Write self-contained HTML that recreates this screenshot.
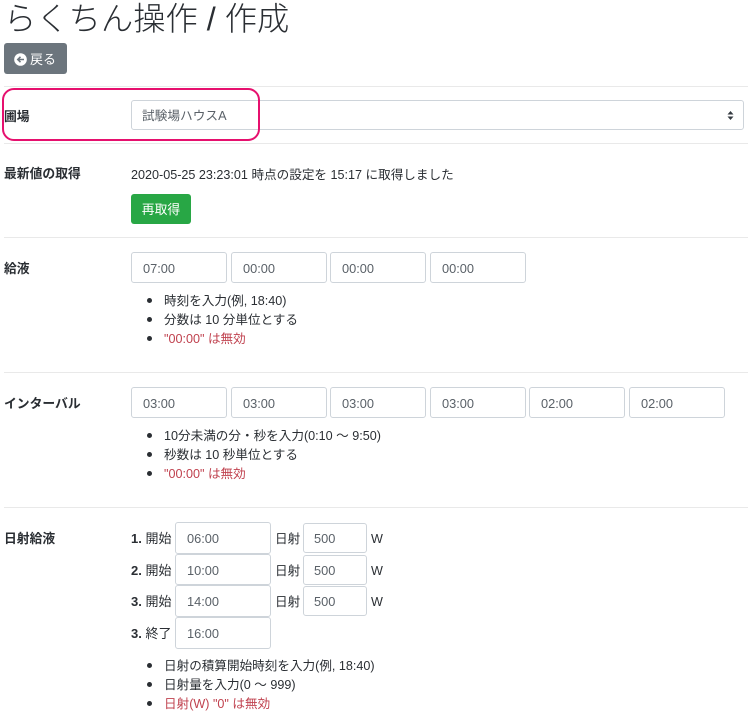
<!DOCTYPE html>
<html lang="ja"><head><meta charset="utf-8">
<style>
html,body{margin:0;padding:0;background:#fff}
body{width:748px;height:728px;position:relative;overflow:hidden;font-family:"Liberation Sans","Noto Sans CJK JP",sans-serif;font-size:12.6px;color:#2a2e33}
.a{position:absolute;white-space:nowrap;line-height:20px}
.hr{position:absolute;left:4px;width:744px;height:1px;background:#e9e9e9}
.lb{position:absolute;left:4px;font-weight:bold;font-size:12.8px;line-height:20px;white-space:nowrap}
.i{position:absolute;box-sizing:border-box;border:1px solid #ced4da;border-radius:3px;background:#fff;color:#5a6168;font-size:12.8px;line-height:31px;padding-left:11px;white-space:nowrap}
.s{line-height:29px;padding-left:10px}
.li{position:absolute;left:164px;line-height:19px;white-space:nowrap}
.li:before{content:"";position:absolute;left:-17px;top:6px;width:5px;height:5px;border-radius:50%;background:#2a2e33}
.r{color:#c0424f}
</style></head><body>
<div class="a" style="left:4px;top:-4px;font-size:32.3px;line-height:46px;font-weight:300">らくちん操作 / 作成</div>
<div class="a" style="left:4px;top:43px;width:63px;height:31px;background:#6c757d;border-radius:3px"></div>
<svg style="position:absolute;left:14px;top:53px" width="13" height="13" viewBox="0 0 13 13"><circle cx="6.5" cy="6.5" r="6.3" fill="#fff"/><path d="M10 6.5H4M6.5 3.8 3.8 6.5l2.7 2.7" fill="none" stroke="#6c757d" stroke-width="1.6"/></svg>
<div class="a" style="left:30px;top:50px;color:#fff;font-size:13px">戻る</div>
<div class="hr" style="top:86px"></div>
<div class="hr" style="top:143px"></div>
<div class="hr" style="top:237px"></div>
<div class="hr" style="top:372px"></div>
<div class="hr" style="top:507px"></div>

<div class="lb" style="top:107px">圃場</div>
<div class="i" style="left:131px;top:100px;width:613px;height:30px;padding-left:10px;line-height:30px;font-size:12.7px">試験場ハウスA</div>
<svg style="position:absolute;left:727px;top:111px" width="7" height="9" viewBox="0 0 7 9"><path d="M3.5 0 6.5 3.5H.5zM3.5 9 .5 5.5h6z" fill="#343a40"/></svg>
<div style="position:absolute;left:2px;top:88px;width:254px;height:49px;border:2px solid #e6106e;border-radius:12px"></div>

<div class="lb" style="top:164px">最新値の取得</div>
<div class="a" style="left:131px;top:165px">2020-05-25 23:23:01 時点の設定を 15:17 に取得しました</div>
<div class="a" style="left:131px;top:194px;width:60px;height:30px;background:#28a745;border-radius:3px;color:#fff;text-align:center;line-height:31px;font-size:12.8px">再取得</div>

<div class="lb" style="top:259px">給液</div>
<div class="i" style="left:131px;top:252px;width:96px;height:31px">07:00</div>
<div class="i" style="left:231px;top:252px;width:96px;height:31px">00:00</div>
<div class="i" style="left:330px;top:252px;width:96px;height:31px">00:00</div>
<div class="i" style="left:430px;top:252px;width:96px;height:31px">00:00</div>
<div class="li" style="top:292px">時刻を入力(例, 18:40)</div>
<div class="li" style="top:311px">分数は 10 分単位とする</div>
<div class="li r" style="top:330px">"00:00" は無効</div>

<div class="lb" style="top:394px">インターバル</div>
<div class="i" style="left:131px;top:387px;width:96px;height:31px">03:00</div>
<div class="i" style="left:231px;top:387px;width:96px;height:31px">03:00</div>
<div class="i" style="left:330px;top:387px;width:96px;height:31px">03:00</div>
<div class="i" style="left:430px;top:387px;width:96px;height:31px">03:00</div>
<div class="i" style="left:529px;top:387px;width:96px;height:31px">02:00</div>
<div class="i" style="left:629px;top:387px;width:96px;height:31px">02:00</div>
<div class="li" style="top:427px">10分未満の分・秒を入力(0:10 ～ 9:50)</div>
<div class="li" style="top:446px">秒数は 10 秒単位とする</div>
<div class="li r" style="top:465px">"00:00" は無効</div>

<div class="lb" style="top:529px">日射給液</div>

<div class="a" style="left:131px;top:529px;font-size:13px"><b>1.</b> 開始</div>
<div class="i" style="left:175px;top:522px;width:96px;height:32px">06:00</div>
<div class="a" style="left:275px;top:529px">日射</div>
<div class="i s" style="left:303px;top:523px;width:64px;height:30px">500</div>
<div class="a" style="left:371px;top:529px">W</div>

<div class="a" style="left:131px;top:561px;font-size:13px"><b>2.</b> 開始</div>
<div class="i" style="left:175px;top:554px;width:96px;height:31px">10:00</div>
<div class="a" style="left:275px;top:561px">日射</div>
<div class="i s" style="left:303px;top:555px;width:64px;height:30px">500</div>
<div class="a" style="left:371px;top:561px">W</div>

<div class="a" style="left:131px;top:592px;font-size:13px"><b>3.</b> 開始</div>
<div class="i" style="left:175px;top:585px;width:96px;height:32px;line-height:32px">14:00</div>
<div class="a" style="left:275px;top:592px">日射</div>
<div class="i s" style="left:303px;top:586px;width:64px;height:30px;line-height:30px">500</div>
<div class="a" style="left:371px;top:592px">W</div>

<div class="a" style="left:131px;top:624px;font-size:13px"><b>3.</b> 終了</div>
<div class="i" style="left:175px;top:617px;width:96px;height:32px;line-height:32px">16:00</div>

<div class="li" style="top:657px">日射の積算開始時刻を入力(例, 18:40)</div>
<div class="li" style="top:676px">日射量を入力(0 ～ 999)</div>
<div class="li r" style="top:695px">日射(W) "0" は無効</div>
</body></html>
